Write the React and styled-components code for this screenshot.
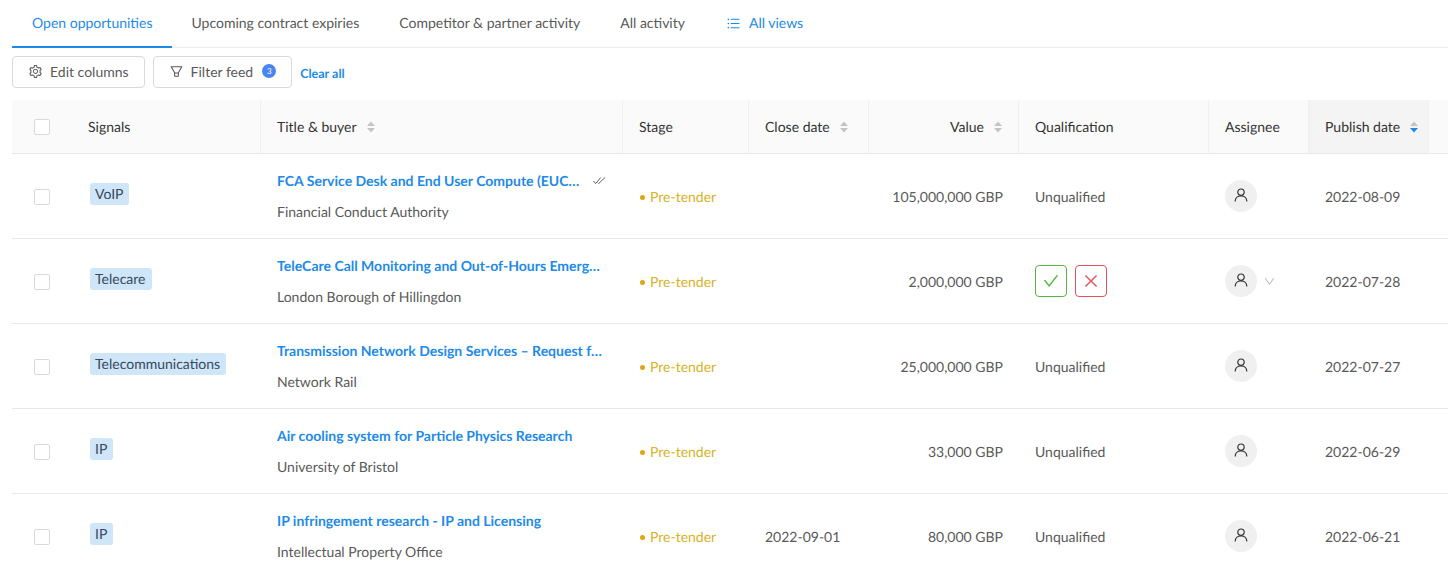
import React from "react";
import styled, { createGlobalStyle } from "styled-components";
import {
  AiOutlineSetting,
  AiOutlineFilter,
  AiOutlineUnorderedList,
  AiOutlineCheck,
  AiOutlineClose,
  AiOutlineDown,
} from "react-icons/ai";

const Global = createGlobalStyle`
  html, body { margin: 0; height: 573px; overflow: hidden; background: #fff; }
  body { font-family: Lato, "Open Sans", sans-serif; font-size: 14px; color: #595959; text-rendering: geometricPrecision; }
  * { box-sizing: border-box; }
`;

const COLS = "64px 184px 362px 126px 120px 150px 190px 100px 120px 20px";
const BLUE = "#1e8ae8";

const Page = styled.div`
  padding-left: 12px;
`;
const Tabs = styled.nav`
  display: flex;
  height: 48px;
  border-bottom: 1px solid #ececec;
`;
const Tab = styled.div`
  height: 48px;
  padding: 0 20px;
  margin-right: ${(p) => (p.$active ? "-1px" : "0")};
  display: flex;
  align-items: center;
  gap: 8px;
  line-height: 20px;
  color: ${(p) => (p.$blue ? BLUE : "#595959")};
  border-bottom: 2px solid ${(p) => (p.$active ? BLUE : "transparent")};
  svg { font-size: 15px; margin-left: 1px; }
`;
const Toolbar = styled.div`
  display: flex;
  align-items: center;
  gap: 8px;
  height: 32px;
  margin-top: 8px;
`;
const Button = styled.button`
  font: inherit;
  color: #595959;
  height: 32px;
  padding: 0 15px 2px;
  display: flex;
  align-items: center;
  gap: 7px;
  background: #fff;
  border: 1px solid #d9d9d9;
  border-radius: 4px;
  svg { font-size: 15px; }
`;
const Badge = styled.span`
  width: 14px;
  height: 14px;
  border-radius: 50%;
  background: #4a84f0;
  color: #fff;
  font-size: 8px;
  line-height: 14px;
  text-align: center;
  margin-left: 2px;
`;
const ClearAll = styled.a`
  color: ${BLUE};
  font-size: 12.5px;
  font-weight: 700;
  padding-top: 2px;
`;
const HeaderRow = styled.div`
  display: grid;
  grid-template-columns: ${COLS};
  height: 54px;
  margin-top: 12px;
  background: #fafafa;
  border-bottom: 1px solid #e8e8e8;
`;
const HeadCell = styled.div`
  display: flex;
  align-items: center;
  gap: 10px;
  padding: 0 16px;
  color: #333;
  white-space: nowrap;
  justify-content: ${(p) => (p.$right ? "flex-end" : "flex-start")};
  background: ${(p) => (p.$sorted ? "#f4f4f4" : "transparent")};
  background-clip: padding-box;
  border-left: 1px solid #f0f0f0;
`;
const CheckCell = styled.div`
  display: flex;
  align-items: center;
  padding: ${(p) => (p.$body ? "2px 0 0 22px" : "0 0 0 22px")};
`;
const SignalHead = styled.div`
  display: flex;
  align-items: center;
  padding-left: 12px;
  color: #333;
`;
const Box = styled.span`
  width: 16px;
  height: 16px;
  background: #fff;
  border: 1px solid #d9d9d9;
  border-radius: 2px;
`;
const Row = styled.div`
  display: grid;
  grid-template-columns: ${COLS};
  height: 85px;
  border-bottom: 1px solid #e8e8e8;
`;
const Cell = styled.div`
  display: flex;
  align-items: center;
  padding: ${(p) => (p.$right ? "0 15px 0 0" : "0 0 0 17px")};
  justify-content: ${(p) => (p.$right ? "flex-end" : "flex-start")};
  min-width: 0;
`;
const SignalCell = styled.div`
  display: flex;
  align-items: center;
  padding: 0 0 4px 14px;
`;
const Tag = styled.span`
  height: 22px;
  line-height: 22px;
  padding: 0 6px 0 5px;
  background: #cfe5f8;
  border-radius: 3px;
  color: #34495e;
`;
const TitleCell = styled.div`
  padding: 16px 16px 0 17px;
  min-width: 0;
`;
const TitleLine = styled.div`
  display: flex;
  align-items: center;
  height: 20px;
  gap: 13px;
`;
const Title = styled.a`
  display: block;
  max-width: ${(p) => (p.$short ? "303px" : "325px")};
  overflow: hidden;
  white-space: nowrap;
  text-overflow: ellipsis;
  font-weight: 700;
  color: ${BLUE};
`;
const Buyer = styled.div`
  margin-top: 12px;
  line-height: 20px;
`;
const Stage = styled.span`
  color: #d9b226;
  white-space: nowrap;
  &::before {
    content: "";
    display: inline-block;
    width: 5px;
    height: 5px;
    border-radius: 50%;
    background: #dba617;
    margin: 0 5px 0 1px;
    vertical-align: 2px;
  }
`;
const Avatar = styled.span`
  width: 32px;
  height: 32px;
  border-radius: 50%;
  background: #f0f0f0;
  display: flex;
  align-items: center;
  justify-content: center;
  padding-bottom: 3px;
`;
const AssigneeCell = styled.div`
  display: flex;
  align-items: center;
  gap: 6px;
  padding-left: 17px;
  color: #bfbfbf;
  font-size: 13px;
`;
const Actions = styled.div`
  display: flex;
  gap: 8px;
`;
const ActionButton = styled.span`
  width: 32px;
  height: 32px;
  border-radius: 4px;
  border: 1px solid ${(p) => p.$color};
  color: ${(p) => p.$color};
  display: flex;
  align-items: center;
  justify-content: center;
  font-size: 18px;
`;
const SortSvg = styled.svg`
  width: 8px;
  height: 12px;
  flex: none;
`;

const Sort = ({ active }) => (
  <SortSvg viewBox="0 0 8 12">
    <path d="M4 0.5 L8 5 H0 Z" fill="#c4c4c4" />
    <path d="M0 7 H8 L4 11.5 Z" fill={active ? BLUE : "#c4c4c4"} />
  </SortSvg>
);

const DoubleCheck = () => (
  <svg width="15" height="9" viewBox="0 0 15 9" fill="none" stroke="#333" strokeWidth="0.9">
    <path d="M.5 5 L3 8 L9 1" />
    <path d="M5.5 7 L6.5 8 L14 1" />
  </svg>
);

const UserIcon = () => (
  <svg width="14" height="14" viewBox="0 0 14 14" fill="none" stroke="#333" strokeWidth="1.2" strokeLinecap="round">
    <circle cx="7" cy="4.2" r="3.2" />
    <path d="M1.2 13 C1.4 9.8 3.6 8 7 8 C10.4 8 12.6 9.8 12.8 13" />
  </svg>
);

const rows = [
  { signal: "VoIP", title: "FCA Service Desk and End User Compute (EUC) Managed Services", buyer: "Financial Conduct Authority", value: "105,000,000 GBP", date: "2022-08-09", seen: true },
  { signal: "Telecare", title: "TeleCare Call Monitoring and Out-of-Hours Emergency Response", buyer: "London Borough of Hillingdon", value: "2,000,000 GBP", date: "2022-07-28", pending: true },
  { signal: "Telecommunications", title: "Transmission Network Design Services – Request for Information", buyer: "Network Rail", value: "25,000,000 GBP", date: "2022-07-27" },
  { signal: "IP", title: "Air cooling system for Particle Physics Research", buyer: "University of Bristol", value: "33,000 GBP", date: "2022-06-29" },
  { signal: "IP", title: "IP infringement research - IP and Licensing", buyer: "Intellectual Property Office", value: "80,000 GBP", date: "2022-06-21", close: "2022-09-01" },
];

export default function App() {
  return (
    <Page>
      <Global />
      <Tabs>
        <Tab $active $blue>Open opportunities</Tab>
        <Tab>Upcoming contract expiries</Tab>
        <Tab>Competitor &amp; partner activity</Tab>
        <Tab>All activity</Tab>
        <Tab $blue><AiOutlineUnorderedList />All views</Tab>
      </Tabs>
      <Toolbar>
        <Button><AiOutlineSetting />Edit columns</Button>
        <Button><AiOutlineFilter />Filter feed<Badge>3</Badge></Button>
        <ClearAll>Clear all</ClearAll>
      </Toolbar>
      <HeaderRow>
        <CheckCell><Box /></CheckCell>
        <SignalHead>Signals</SignalHead>
        <HeadCell>Title &amp; buyer<Sort /></HeadCell>
        <HeadCell>Stage</HeadCell>
        <HeadCell>Close date<Sort /></HeadCell>
        <HeadCell $right>Value<Sort /></HeadCell>
        <HeadCell>Qualification</HeadCell>
        <HeadCell>Assignee</HeadCell>
        <HeadCell $sorted>Publish date<Sort active /></HeadCell>
        <HeadCell />
      </HeaderRow>
      {rows.map((r) => (
        <Row key={r.title}>
          <CheckCell $body><Box /></CheckCell>
          <SignalCell><Tag>{r.signal}</Tag></SignalCell>
          <TitleCell>
            <TitleLine>
              <Title $short={r.seen}>{r.title}</Title>
              {r.seen && <DoubleCheck />}
            </TitleLine>
            <Buyer>{r.buyer}</Buyer>
          </TitleCell>
          <Cell><Stage>Pre-tender</Stage></Cell>
          <Cell>{r.close}</Cell>
          <Cell $right>{r.value}</Cell>
          <Cell>
            {r.pending ? (
              <Actions>
                <ActionButton $color="#52b83f"><AiOutlineCheck /></ActionButton>
                <ActionButton $color="#e5535a"><AiOutlineClose /></ActionButton>
              </Actions>
            ) : "Unqualified"}
          </Cell>
          <AssigneeCell>
            <Avatar><UserIcon /></Avatar>
            {r.pending && <AiOutlineDown />}
          </AssigneeCell>
          <Cell>{r.date}</Cell>
          <div />
        </Row>
      ))}
    </Page>
  );
}
